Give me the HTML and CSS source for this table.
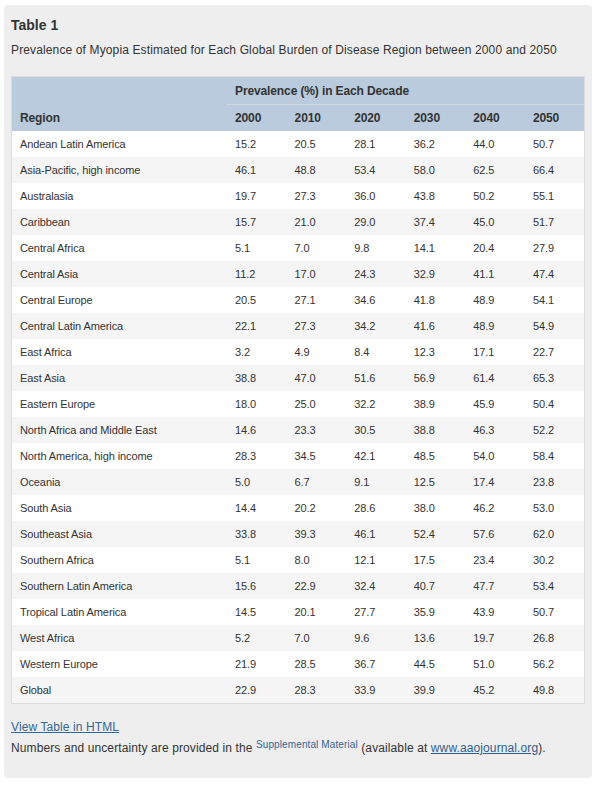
FILE: index.html
```html
<!DOCTYPE html>
<html>
<head>
<meta charset="utf-8">
<link rel="stylesheet" href="styles.css">
</head>
<body>
<div class="panel">
  <h2 class="title">Table 1</h2>
  <p class="caption">Prevalence of Myopia Estimated for Each Global Burden of Disease Region between 2000 and 2050</p>
  <table class="data">
    <thead>
      <tr class="h1">
        <th class="region"></th>
        <th colspan="6" class="group">Prevalence (%) in Each Decade</th>
      </tr>
      <tr class="h2">
        <th class="region">Region</th>
        <th>2000</th><th>2010</th><th>2020</th><th>2030</th><th>2040</th><th>2050</th>
      </tr>
    </thead>
    <tbody>
      <tr><td>Andean Latin America</td><td>15.2</td><td>20.5</td><td>28.1</td><td>36.2</td><td>44.0</td><td>50.7</td></tr>
      <tr><td>Asia-Pacific, high income</td><td>46.1</td><td>48.8</td><td>53.4</td><td>58.0</td><td>62.5</td><td>66.4</td></tr>
      <tr><td>Australasia</td><td>19.7</td><td>27.3</td><td>36.0</td><td>43.8</td><td>50.2</td><td>55.1</td></tr>
      <tr><td>Caribbean</td><td>15.7</td><td>21.0</td><td>29.0</td><td>37.4</td><td>45.0</td><td>51.7</td></tr>
      <tr><td>Central Africa</td><td>5.1</td><td>7.0</td><td>9.8</td><td>14.1</td><td>20.4</td><td>27.9</td></tr>
      <tr><td>Central Asia</td><td>11.2</td><td>17.0</td><td>24.3</td><td>32.9</td><td>41.1</td><td>47.4</td></tr>
      <tr><td>Central Europe</td><td>20.5</td><td>27.1</td><td>34.6</td><td>41.8</td><td>48.9</td><td>54.1</td></tr>
      <tr><td>Central Latin America</td><td>22.1</td><td>27.3</td><td>34.2</td><td>41.6</td><td>48.9</td><td>54.9</td></tr>
      <tr><td>East Africa</td><td>3.2</td><td>4.9</td><td>8.4</td><td>12.3</td><td>17.1</td><td>22.7</td></tr>
      <tr><td>East Asia</td><td>38.8</td><td>47.0</td><td>51.6</td><td>56.9</td><td>61.4</td><td>65.3</td></tr>
      <tr><td>Eastern Europe</td><td>18.0</td><td>25.0</td><td>32.2</td><td>38.9</td><td>45.9</td><td>50.4</td></tr>
      <tr><td>North Africa and Middle East</td><td>14.6</td><td>23.3</td><td>30.5</td><td>38.8</td><td>46.3</td><td>52.2</td></tr>
      <tr><td>North America, high income</td><td>28.3</td><td>34.5</td><td>42.1</td><td>48.5</td><td>54.0</td><td>58.4</td></tr>
      <tr><td>Oceania</td><td>5.0</td><td>6.7</td><td>9.1</td><td>12.5</td><td>17.4</td><td>23.8</td></tr>
      <tr><td>South Asia</td><td>14.4</td><td>20.2</td><td>28.6</td><td>38.0</td><td>46.2</td><td>53.0</td></tr>
      <tr><td>Southeast Asia</td><td>33.8</td><td>39.3</td><td>46.1</td><td>52.4</td><td>57.6</td><td>62.0</td></tr>
      <tr><td>Southern Africa</td><td>5.1</td><td>8.0</td><td>12.1</td><td>17.5</td><td>23.4</td><td>30.2</td></tr>
      <tr><td>Southern Latin America</td><td>15.6</td><td>22.9</td><td>32.4</td><td>40.7</td><td>47.7</td><td>53.4</td></tr>
      <tr><td>Tropical Latin America</td><td>14.5</td><td>20.1</td><td>27.7</td><td>35.9</td><td>43.9</td><td>50.7</td></tr>
      <tr><td>West Africa</td><td>5.2</td><td>7.0</td><td>9.6</td><td>13.6</td><td>19.7</td><td>26.8</td></tr>
      <tr><td>Western Europe</td><td>21.9</td><td>28.5</td><td>36.7</td><td>44.5</td><td>51.0</td><td>56.2</td></tr>
      <tr><td>Global</td><td>22.9</td><td>28.3</td><td>33.9</td><td>39.9</td><td>45.2</td><td>49.8</td></tr>
    </tbody>
  </table>
  <p class="viewlink"><a href="#">View Table in HTML</a></p>
  <p class="note">Numbers and uncertainty are provided in the <sup><a class="supp" href="#">Supplemental Material</a></sup> (available at <a class="ext" href="#">www.aaojournal.org</a>).</p>
</div>
</body>
</html>
```

FILE: styles.css
```css
html, body {
  margin: 0;
  padding: 0;
  background: #ffffff;
}
body {
  padding: 5px 8px 12px 4px;
  font-family: "Liberation Sans", Arial, sans-serif;
  color: #333333;
}
.panel {
  width: 574px;
  background: #eeeeee;
  border-radius: 4px;
  padding: 10px 7px 21px 7px;
}
.title {
  margin: 0;
  font-size: 14px;
  font-weight: bold;
  line-height: 20px;
  color: #333333;
}
.caption {
  margin: 5px 0 0 0;
  font-size: 12px;
  line-height: 20px;
  letter-spacing: 0.13px;
}
.data {
  margin-top: 16px;
  width: 574px;
  border-collapse: collapse;
  border: 1px solid #dddddd;
  font-size: 11px;
  table-layout: fixed;
}
.data th {
  background: #b9cbdc;
  font-size: 12px;
  font-weight: bold;
  text-align: left;
  padding: 0 8px;
  height: 26px;
  color: #333333;
  letter-spacing: -0.12px;
}
.data .h1 th {
  height: 27px;
}
.data th.region {
  width: 199px;
}
.data .h1 th.group {
  border-bottom: 1px solid #cfd8e0;
}
.data td {
  height: 26px;
  padding: 0 8px;
  background: #ffffff;
  letter-spacing: -0.1px;
}
.data tbody tr:nth-child(even) td {
  background: #f5f5f5;
}
.viewlink {
  margin: 14px 0 0 0;
  font-size: 12px;
  line-height: 18px;
  letter-spacing: 0.1px;
}
.viewlink a {
  color: #336699;
  text-decoration: underline;
}
.note {
  margin: 3px 0 0 0;
  font-size: 12px;
  line-height: 18px;
  letter-spacing: 0.11px;
}
.note sup {
  font-size: 10px;
  vertical-align: 4px;
  line-height: 0;
}
.note a.supp {
  color: #336699;
  text-decoration: none;
}
.note a.ext {
  color: #2f5f8f;
  text-decoration: underline;
}
```
